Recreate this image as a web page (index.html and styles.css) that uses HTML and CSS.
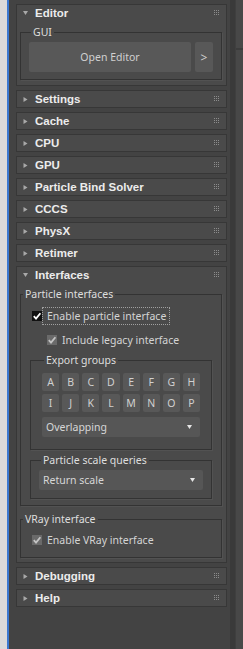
FILE: index.html
```html
<!DOCTYPE html>
<html lang="en">

<head>
    <meta charset="UTF-8">
    <meta name="viewport" content="width=device-width, initial-scale=1.0">
    <title>tyFlow panel</title>
    <link rel="stylesheet" href="styles.css">
</head>

<body>
    <div class="app">
        <div class="edge"></div>
        <div class="accent"></div>

        <div class="panel">
            <!-- Editor rollout (open) -->
            <div class="rollout">
                <div class="head">
                    <svg class="tri" width="5" height="4" viewBox="0 0 5 4"><polygon points="0,0 5,0 2.5,4" /></svg>
                    <span class="title">Editor</span>
                    <svg class="grip" width="6" height="6" viewBox="0 0 6 6"><path d="M0 0h1v1H0zM2 0h1v1H2zM4 0h1v1H4zM0 2h1v1H0zM2 2h1v1H2zM4 2h1v1H4zM0 4h1v1H0zM2 4h1v1H2zM4 4h1v1H4z" /></svg>
                </div>
                <div class="body editorBody">
                    <fieldset class="group gui">
                        <legend>GUI</legend>
                        <button class="btn wide">Open Editor</button>
                        <button class="btn small">&gt;</button>
                    </fieldset>
                </div>
            </div>

            <div class="rollout">
                <div class="head">
                    <svg class="tri" width="4" height="5" viewBox="0 0 4 5"><polygon points="0,0 4,2.5 0,5" /></svg>
                    <span class="title">Settings</span>
                    <svg class="grip" width="6" height="6" viewBox="0 0 6 6"><path d="M0 0h1v1H0zM2 0h1v1H2zM4 0h1v1H4zM0 2h1v1H0zM2 2h1v1H2zM4 2h1v1H4zM0 4h1v1H0zM2 4h1v1H2zM4 4h1v1H4z" /></svg>
                </div>
            </div>
            <div class="rollout">
                <div class="head">
                    <svg class="tri" width="4" height="5" viewBox="0 0 4 5"><polygon points="0,0 4,2.5 0,5" /></svg>
                    <span class="title">Cache</span>
                    <svg class="grip" width="6" height="6" viewBox="0 0 6 6"><path d="M0 0h1v1H0zM2 0h1v1H2zM4 0h1v1H4zM0 2h1v1H0zM2 2h1v1H2zM4 2h1v1H4zM0 4h1v1H0zM2 4h1v1H2zM4 4h1v1H4z" /></svg>
                </div>
            </div>
            <div class="rollout">
                <div class="head">
                    <svg class="tri" width="4" height="5" viewBox="0 0 4 5"><polygon points="0,0 4,2.5 0,5" /></svg>
                    <span class="title">CPU</span>
                    <svg class="grip" width="6" height="6" viewBox="0 0 6 6"><path d="M0 0h1v1H0zM2 0h1v1H2zM4 0h1v1H4zM0 2h1v1H0zM2 2h1v1H2zM4 2h1v1H4zM0 4h1v1H0zM2 4h1v1H2zM4 4h1v1H4z" /></svg>
                </div>
            </div>
            <div class="rollout">
                <div class="head">
                    <svg class="tri" width="4" height="5" viewBox="0 0 4 5"><polygon points="0,0 4,2.5 0,5" /></svg>
                    <span class="title">GPU</span>
                    <svg class="grip" width="6" height="6" viewBox="0 0 6 6"><path d="M0 0h1v1H0zM2 0h1v1H2zM4 0h1v1H4zM0 2h1v1H0zM2 2h1v1H2zM4 2h1v1H4zM0 4h1v1H0zM2 4h1v1H2zM4 4h1v1H4z" /></svg>
                </div>
            </div>
            <div class="rollout">
                <div class="head">
                    <svg class="tri" width="4" height="5" viewBox="0 0 4 5"><polygon points="0,0 4,2.5 0,5" /></svg>
                    <span class="title">Particle Bind Solver</span>
                    <svg class="grip" width="6" height="6" viewBox="0 0 6 6"><path d="M0 0h1v1H0zM2 0h1v1H2zM4 0h1v1H4zM0 2h1v1H0zM2 2h1v1H2zM4 2h1v1H4zM0 4h1v1H0zM2 4h1v1H2zM4 4h1v1H4z" /></svg>
                </div>
            </div>
            <div class="rollout">
                <div class="head">
                    <svg class="tri" width="4" height="5" viewBox="0 0 4 5"><polygon points="0,0 4,2.5 0,5" /></svg>
                    <span class="title">CCCS</span>
                    <svg class="grip" width="6" height="6" viewBox="0 0 6 6"><path d="M0 0h1v1H0zM2 0h1v1H2zM4 0h1v1H4zM0 2h1v1H0zM2 2h1v1H2zM4 2h1v1H4zM0 4h1v1H0zM2 4h1v1H2zM4 4h1v1H4z" /></svg>
                </div>
            </div>
            <div class="rollout">
                <div class="head">
                    <svg class="tri" width="4" height="5" viewBox="0 0 4 5"><polygon points="0,0 4,2.5 0,5" /></svg>
                    <span class="title">PhysX</span>
                    <svg class="grip" width="6" height="6" viewBox="0 0 6 6"><path d="M0 0h1v1H0zM2 0h1v1H2zM4 0h1v1H4zM0 2h1v1H0zM2 2h1v1H2zM4 2h1v1H4zM0 4h1v1H0zM2 4h1v1H2zM4 4h1v1H4z" /></svg>
                </div>
            </div>
            <div class="rollout">
                <div class="head">
                    <svg class="tri" width="4" height="5" viewBox="0 0 4 5"><polygon points="0,0 4,2.5 0,5" /></svg>
                    <span class="title">Retimer</span>
                    <svg class="grip" width="6" height="6" viewBox="0 0 6 6"><path d="M0 0h1v1H0zM2 0h1v1H2zM4 0h1v1H4zM0 2h1v1H0zM2 2h1v1H2zM4 2h1v1H4zM0 4h1v1H0zM2 4h1v1H2zM4 4h1v1H4z" /></svg>
                </div>
            </div>

            <!-- Interfaces rollout (open) -->
            <div class="rollout">
                <div class="head">
                    <svg class="tri" width="5" height="4" viewBox="0 0 5 4"><polygon points="0,0 5,0 2.5,4" /></svg>
                    <span class="title">Interfaces</span>
                    <svg class="grip" width="6" height="6" viewBox="0 0 6 6"><path d="M0 0h1v1H0zM2 0h1v1H2zM4 0h1v1H4zM0 2h1v1H0zM2 2h1v1H2zM4 2h1v1H4zM0 4h1v1H0zM2 4h1v1H2zM4 4h1v1H4z" /></svg>
                </div>
                <div class="body">
                    <fieldset class="group particle">
                        <legend>Particle interfaces</legend>

                        <div class="check first">
                            <span class="box dark"><svg width="10" height="10" viewBox="0 0 10 10"><path d="M1.8 5.2 L4 7.6 L8.4 2.2" /></svg></span>
                            <span class="focus">Enable particle interface</span>
                        </div>
                        <div class="check legacy">
                            <span class="box"><svg width="10" height="10" viewBox="0 0 10 10"><path d="M1.8 5.2 L4 7.6 L8.4 2.2" /></svg></span>
                            <span class="label">Include legacy interface</span>
                        </div>

                        <fieldset class="group inner exportGroups">
                            <legend>Export groups</legend>
                            <div class="letters">
                                <button class="btn key">A</button>
                                <button class="btn key">B</button>
                                <button class="btn key">C</button>
                                <button class="btn key">D</button>
                                <button class="btn key">E</button>
                                <button class="btn key">F</button>
                                <button class="btn key">G</button>
                                <button class="btn key">H</button>
                                <button class="btn key">I</button>
                                <button class="btn key">J</button>
                                <button class="btn key">K</button>
                                <button class="btn key">L</button>
                                <button class="btn key">M</button>
                                <button class="btn key">N</button>
                                <button class="btn key">O</button>
                                <button class="btn key">P</button>
                            </div>
                            <div class="dropdown overlap">
                                <span>Overlapping</span>
                                <svg width="5" height="4" viewBox="0 0 5 4"><polygon points="0,0 5,0 2.5,4" /></svg>
                            </div>
                        </fieldset>

                        <fieldset class="group inner scaleQueries">
                            <legend>Particle scale queries</legend>
                            <div class="dropdown">
                                <span>Return scale</span>
                                <svg width="5" height="4" viewBox="0 0 5 4"><polygon points="0,0 5,0 2.5,4" /></svg>
                            </div>
                        </fieldset>
                    </fieldset>

                    <fieldset class="group vray">
                        <legend>VRay interface</legend>
                        <div class="check">
                            <span class="box"><svg width="10" height="10" viewBox="0 0 10 10"><path d="M1.8 5.2 L4 7.6 L8.4 2.2" /></svg></span>
                            <span class="label">Enable VRay interface</span>
                        </div>
                    </fieldset>
                </div>
            </div>

            <div class="rollout">
                <div class="head">
                    <svg class="tri" width="4" height="5" viewBox="0 0 4 5"><polygon points="0,0 4,2.5 0,5" /></svg>
                    <span class="title">Debugging</span>
                    <svg class="grip" width="6" height="6" viewBox="0 0 6 6"><path d="M0 0h1v1H0zM2 0h1v1H2zM4 0h1v1H4zM0 2h1v1H0zM2 2h1v1H2zM4 2h1v1H4zM0 4h1v1H0zM2 4h1v1H2zM4 4h1v1H4z" /></svg>
                </div>
            </div>
            <div class="rollout">
                <div class="head">
                    <svg class="tri" width="4" height="5" viewBox="0 0 4 5"><polygon points="0,0 4,2.5 0,5" /></svg>
                    <span class="title">Help</span>
                    <svg class="grip" width="6" height="6" viewBox="0 0 6 6"><path d="M0 0h1v1H0zM2 0h1v1H2zM4 0h1v1H4zM0 2h1v1H0zM2 2h1v1H2zM4 2h1v1H4zM0 4h1v1H0zM2 4h1v1H2zM4 4h1v1H4z" /></svg>
                </div>
            </div>
        </div>

        <div class="gutter"></div>
        <div class="scroll">
            <div class="thumb"></div>
        </div>
    </div>
</body>

</html>
```

FILE: styles.css
```css
* {
    margin: 0;
    padding: 0;
    box-sizing: border-box;
}

body {
    background-color: #434343;
    font-family: "Noto Sans", "Open Sans", sans-serif;
    font-size: 10.5px;
    color: #d4d4d4;
}

.app {
    display: flex;
    height: 649px;
    overflow: hidden;
}

.edge {
    width: 7px;
    background-color: #dadada;
}

.accent {
    width: 2px;
    background-color: #3a78d0;
}

.panel {
    flex: 1;
    padding: 4px 3px 0 7px;
    background-color: #434343;
}

.gutter {
    width: 5px;
    background-color: #3a3a3a;
}

.scroll {
    width: 8px;
    background-color: #484848;
    border-left: 1px solid #3f3f3f;
}

.thumb {
    height: 50px;
    border-bottom: 2px solid #3c3c3c;
}

/* rollouts */

.rollout {
    border: 1px solid #373737;
    background-color: #4a4a4a;
    margin-bottom: 4px;
}

.head {
    height: 16px;
    display: flex;
    align-items: center;
    padding-left: 6px;
}

.tri {
    fill: #a9a9a9;
    width: 5px;
    flex: none;
}

.title {
    flex: 1;
    margin-left: 7px;
    font-family: "Liberation Sans", Arial, sans-serif;
    font-weight: bold;
    font-size: 11.5px;
    color: #ececec;
}

.grip {
    fill: #8c8c8c;
    margin-right: 6px;
}

.body {
    padding: 4px 4px 4px 3px;
}

.editorBody {
    padding-bottom: 5px;
}

/* group boxes */

.group {
    border: 1px solid #333333;
    box-shadow: 1px 1px 0 #525252;
}

.group legend {
    margin-left: 2px;
    padding: 0 2px;
    line-height: 14px;
    color: #dedede;
}

.gui {
    display: flex;
    gap: 4px;
    padding: 3px 8px 7px 8px;
}

.particle {
    padding: 0 0 6px 0;
}

.vray {
    margin-top: 6px;
    padding: 0 0 8px 0;
}

.inner {
    margin: 0 9px;
}

.exportGroups {
    margin-top: 4px;
    padding: 6px 11px 12px 11px;
}

.scaleQueries {
    margin-top: 3px;
    padding: 3px 8px 8px 8px;
}

/* buttons */

.btn {
    font-family: inherit;
    font-size: 10.5px;
    color: #d0d0d0;
    background-color: #585858;
    border: none;
    border-radius: 2px;
}

.wide {
    flex: 1;
    height: 30px;
}

.small {
    width: 18px;
    height: 30px;
    font-size: 12px;
}

.letters {
    display: grid;
    grid-template-columns: repeat(8, 1fr);
    gap: 3px;
}

.key {
    height: 18px;
    padding: 0;
}

.dropdown {
    height: 20px;
    display: flex;
    align-items: center;
    justify-content: space-between;
    padding: 0 8px 0 4px;
    background-color: #565656;
    border-radius: 2px;
    color: #d6d6d6;
}

.overlap {
    margin-top: 5px;
}

.dropdown svg {
    fill: #e6e6e6;
}

/* checkboxes */

.check {
    height: 18px;
    display: flex;
    align-items: center;
    padding-left: 11px;
    margin-top: 5px;
}

.check.first {
    margin-top: 6px;
}

.check.legacy {
    margin-top: 6px;
    padding-left: 26px;
}

.box {
    width: 10px;
    height: 10px;
    background-color: #6a6a6a;
    display: flex;
}

.box svg {
    fill: none;
    stroke: #c4c4c4;
    stroke-width: 1.8;
}

.box.dark {
    background-color: #111111;
}

.box.dark svg {
    stroke: #ffffff;
}

.label {
    margin-left: 5px;
}

.focus {
    height: 18px;
    line-height: 16px;
    border: 1px dotted #a0a0a0;
    padding: 0 3px 0 4px;
}
```
